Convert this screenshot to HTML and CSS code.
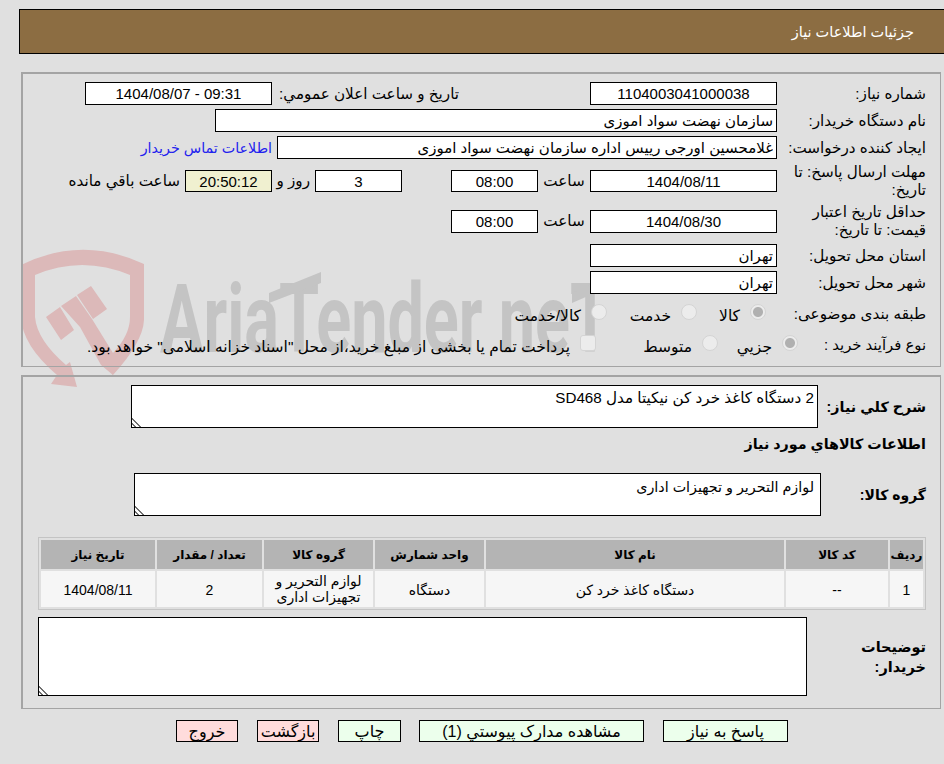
FILE: index.html
```html
<!DOCTYPE html>
<html lang="fa" dir="rtl">
<head>
<meta charset="utf-8">
<title>جزئیات اطلاعات نیاز</title>
<link rel="stylesheet" href="styles.css">
</head>
<body>
<svg class="watermark" viewBox="0 0 944 764" width="944" height="764" aria-hidden="true">
  <path class="shield" fill-rule="evenodd" d="M21 265 Q82 235 144 264 L144 320 Q143 342 113 375 L100 356 L113 353 Q130 335 130 317 L130 275 Q82 255 35 275 L35 317 Q37 340 66 365 L70 362 L77 387 L51 384 L57 375 Q22 345 21 317 Z"/>
  <path class="shield" d="M46 317 L60 307 L74 330 L61 340 Z M61 306 L76 296 L92 319 L113 353 L113 375 L101 365 L80 327 Z M77 295 L91 286 L107 309 L93 319 Z"/>
  <text class="wm-text" x="160" y="352" textLength="450" lengthAdjust="spacingAndGlyphs">AriaTender neT</text>
  <path class="wm-bar" d="M269 293 L321 272 L321 283 L269 303 Z M572 293 L618 272 L618 283 L572 303 Z"/>
</svg>

<header class="page-title">جزئیات اطلاعات نیاز</header>

<section class="panel panel-info">
  <div class="row">
    <label class="lbl">شماره نیاز:</label>
    <input class="field date-w center" value="1104003041000038" readonly>
    <label class="lbl-announce">تاریخ و ساعت اعلان عمومي:</label>
    <input class="field date-w center" value="1404/08/07 - 09:31" readonly dir="ltr">
  </div>
  <div class="row">
    <label class="lbl">نام دستگاه خریدار:</label>
    <input class="field buyer-w" value="سازمان نهضت سواد اموزی" readonly>
  </div>
  <div class="row">
    <label class="lbl">ایجاد کننده درخواست:</label>
    <input class="field creator-w" value="غلامحسین اورجی رییس اداره سازمان نهضت سواد اموزی" readonly>
    <a class="contact" href="#">اطلاعات تماس خریدار</a>
  </div>
  <div class="row row-tall row-deadline">
    <label class="lbl">مهلت ارسال پاسخ: تا تاریخ:</label>
    <input class="field date-w center short" value="1404/08/11" readonly>
    <span class="hour-lbl">ساعت</span>
    <input class="field time-w center short" value="08:00" readonly>
    <input class="field time-w center short days" value="3" readonly>
    <span class="day-lbl">روز و</span>
    <input class="field time-w center short timer" value="20:50:12" readonly>
    <span class="remain">ساعت باقي مانده</span>
  </div>
  <div class="row row-tall row-validity">
    <label class="lbl">حداقل تاریخ اعتبار قیمت: تا تاریخ:</label>
    <input class="field date-w center" value="1404/08/30" readonly>
    <span class="hour-lbl">ساعت</span>
    <input class="field time-w center" value="08:00" readonly>
  </div>
  <div class="row">
    <label class="lbl">استان محل تحویل:</label>
    <input class="field date-w" value="تهران" readonly>
  </div>
  <div class="row">
    <label class="lbl">شهر محل تحویل:</label>
    <input class="field date-w" value="تهران" readonly>
  </div>
  <div class="row row-radios row-subject">
    <label class="lbl lbl-subject">طبقه بندی موضوعی:</label>
    <span class="opt opt-69"><input type="radio" name="subject" checked disabled>کالا</span>
    <span class="opt opt-90"><input type="radio" name="subject" disabled>خدمت</span>
    <span class="opt"><input type="radio" name="subject" disabled>کالا/خدمت</span>
  </div>
  <div class="row row-radios row-process">
    <label class="lbl lbl-process">نوع فرآیند خرید :</label>
    <span class="opt opt-80"><input type="radio" name="process" checked disabled>جزیي</span>
    <span class="opt opt-122"><input type="radio" name="process" disabled>متوسط</span>
    <span class="opt"><input type="checkbox" disabled>پرداخت تمام یا بخشی از مبلغ خرید،از محل "اسناد خزانه اسلامی" خواهد بود.</span>
  </div>
</section>

<section class="panel panel-items">
  <div class="row need-row">
    <label class="lbl-bold need-lbl">شرح کلي نیاز:</label>
    <textarea class="area need-area" readonly>2 دستگاه کاغذ خرد کن نیکیتا مدل SD468</textarea>
  </div>
  <h2 class="items-title">اطلاعات کالاهاي مورد نیاز</h2>
  <div class="row group-row">
    <label class="lbl-bold group-lbl">گروه کالا:</label>
    <textarea class="area group-area" readonly>لوازم التحریر و تجهیزات اداری</textarea>
  </div>
  <table class="items">
    <colgroup>
      <col class="c1"><col class="c2"><col class="c3"><col class="c4"><col class="c5"><col class="c6"><col class="c7">
    </colgroup>
    <thead>
      <tr><th>ردیف</th><th>کد کالا</th><th>نام کالا</th><th>واحد شمارش</th><th>گروه کالا</th><th>تعداد / مقدار</th><th>تاریخ نیاز</th></tr>
    </thead>
    <tbody>
      <tr><td>1</td><td>--</td><td>دستگاه کاغذ خرد کن</td><td>دستگاه</td><td class="wrap">لوازم التحریر و تجهیزات اداری</td><td>2</td><td>1404/08/11</td></tr>
    </tbody>
  </table>
  <div class="row notes-row">
    <label class="lbl-bold notes-lbl">توضیحات خریدار:</label>
    <textarea class="area notes-area" readonly></textarea>
  </div>
</section>

<nav class="actions">
  <button class="btn green w125" type="button">پاسخ به نیاز</button>
  <button class="btn green w225" type="button">مشاهده مدارک پیوستي (1)</button>
  <button class="btn green w63" type="button">چاپ</button>
  <button class="btn red w62" type="button">بازگشت</button>
  <button class="btn red w62" type="button">خروج</button>
</nav>
</body>
</html>
```
FILE: styles.css
```css
* { box-sizing: border-box; }
html, body { margin: 0; padding: 0; }
body {
  position: relative;
  width: 944px;
  height: 764px;
  overflow: hidden;
  background: #e0e0e0;
  color: #000;
  font-family: "Liberation Sans", "DejaVu Sans", sans-serif;
  font-size: 15.2px;
  line-height: 18px;
}
.watermark { position: absolute; left: 0; top: 0; z-index: 0; }
.shield { fill: #dcb9b9; }
.wm-text { fill: #c4c4c4; font-family: "Roboto", sans-serif; font-weight: 700; font-size: 96px; direction: ltr; }
.wm-bar { fill: #c4c4c4; }

.page-title {
  position: relative;
  height: 45px;
  margin: 9px 0 0 19px;
  padding: 13px 30px 0 0;
  border: 1px solid #000;
  border-right: 0;
  background: #8c6d42;
  color: #fff;
  font-size: 14.5px;
}

.panel {
  position: relative;
  z-index: 1;
  width: 920px;
  margin-right: 3px;
  padding-right: 14px;
  border: 1px solid #a4a4a4;
  border-top-width: 2px;
  border-left-width: 2px;
}
.panel-info { height: 295px; margin-top: 18px; padding-top: 8px; }
.panel-items { height: 334px; margin-top: 8px; padding-top: 8px; }

.row { display: flex; align-items: center; margin-bottom: 4px; }
.lbl { width: 149px; flex: none; padding-left: 10px; }
.lbl-announce { margin-right: 131px; margin-left: 5px; width: 182px; white-space: nowrap; text-align: right; }

.field {
  height: 23px;
  padding: 0 3px;
  border: 1px solid #000;
  background: #fff;
  color: #000;
  font: inherit;
  font-size: 15px;
  text-align: right;
  outline: none;
  border-radius: 0;
}
.field.short { height: 22px; }
.center { text-align: center; }
.date-w { width: 187px; flex: none; }
.time-w { width: 87px; flex: none; }
.buyer-w { width: 562px; }
.creator-w { width: 500px; }
.timer { background: #f0f0d0; }
.days { margin-right: 49px; }
.contact { margin-right: 5px; color: #2222ee; font-size: 14.3px; text-decoration: none; white-space: nowrap; }
.hour-lbl { width: 42px; margin: 0 5px; text-align: center; white-space: nowrap; }
.day-lbl { width: 28px; margin: 0 5px 0 10px; white-space: nowrap; }
.remain { margin-right: 5px; white-space: nowrap; }

.row-deadline { margin-top: 4px; margin-bottom: 4px; }
.row-validity { margin-bottom: 5px; }
.row-radios { margin-bottom: 0; height: 30px; }
.row-subject { margin-top: 7px; }
.row-process { height: 32px; }
.lbl-subject { width: 160px; margin-top: -4px; }
.lbl-process { width: 128px; margin-top: -5px; font-size: 14.8px; }
.opt { display: flex; align-items: center; flex: none; font-size: 15.5px; white-space: nowrap; }
.opt-69 { width: 69px; }
.opt-90 { width: 90px; }
.opt-80 { width: 80px; }
.opt-122 { width: 122px; }
.opt input {
  appearance: none;
  flex: none;
  width: 16px;
  height: 16px;
  margin: -8px 0 0 10px;
  border: 1px solid #d4d4d4;
  border-radius: 50%;
  background: #ececec;
}
.opt input:checked { background: radial-gradient(circle, #b0b0b0 0 4.5px, #ececec 5.5px); }
.opt input[type="checkbox"] { border-radius: 3px; }

.lbl-bold { font-size: 14.3px; font-weight: 700; flex: none; }
.area {
  display: block;
  flex: none;
  padding: 3px 3px 2px;
  border: 1px solid #000;
  border-radius: 0;
  background: #fff;
  color: #000;
  font: inherit;
  outline: none;
}
.area::-webkit-resizer {
  background: linear-gradient(45deg, #fff 0 2px, #707070 2px 3.4px, #fff 3.4px 5.4px, #707070 5.4px 6.8px, #fff 6.8px) left bottom / 10px 10px no-repeat;
}
.need-lbl { width: 108px; }
.need-area { width: 687px; height: 43px; }
.need-row { margin-bottom: 0; }
.items-title { margin: 7px 0 0; height: 18px; font-size: 14.3px; line-height: 18px; }
.group-row { margin: 20px 0 0; }
.group-lbl { width: 105px; font-size: 14px; }
.group-area { width: 687px; height: 43px; padding-right: 6px; padding-top: 4px; font-size: 14.3px; }

.items {
  width: 887px;
  margin-top: 21px;
  table-layout: fixed;
  border-collapse: separate;
  border-spacing: 2px;
  border: 1px solid #c4c4c4;
}
.c1 { width: 33px; } .c2 { width: 102px; } .c3 { width: 298px; } .c4 { width: 109px; }
.c5 { width: 109px; } .c6 { width: 105px; } .c7 { width: 114px; }
.items th { height: 29px; padding: 0; background: #b4b4b4; font-size: 12px; font-weight: 700; text-align: center; white-space: nowrap; }
.items td { height: 36px; padding: 2px 0 0; background: #f6f6f6; font-size: 14px; line-height: 16px; text-align: center; }
.items td.wrap { padding: 0 6px; }

.notes-row { margin: 7px 0 0; }
.notes-lbl { width: 119px; padding-left: 30px; font-size: 14.5px; line-height: 20px; }
.notes-area { width: 769px; height: 79px; }

.actions {
  position: relative;
  z-index: 1;
  display: flex;
  gap: 19px;
  margin-top: 11px;
  padding-right: 156px;
}
.btn {
  height: 22px;
  padding: 2px 0 0;
  border: 1px solid #000;
  border-radius: 0;
  color: #000;
  font: inherit;
  font-size: 16px;
  line-height: 18px;
}
.green { background: #ecffec; }
.red { background: #ffdcdc; }
.w125 { width: 125px; }
.w225 { width: 225px; margin-left: -1px; }
.w63 { width: 63px; }
.w62 { width: 62px; }
```
